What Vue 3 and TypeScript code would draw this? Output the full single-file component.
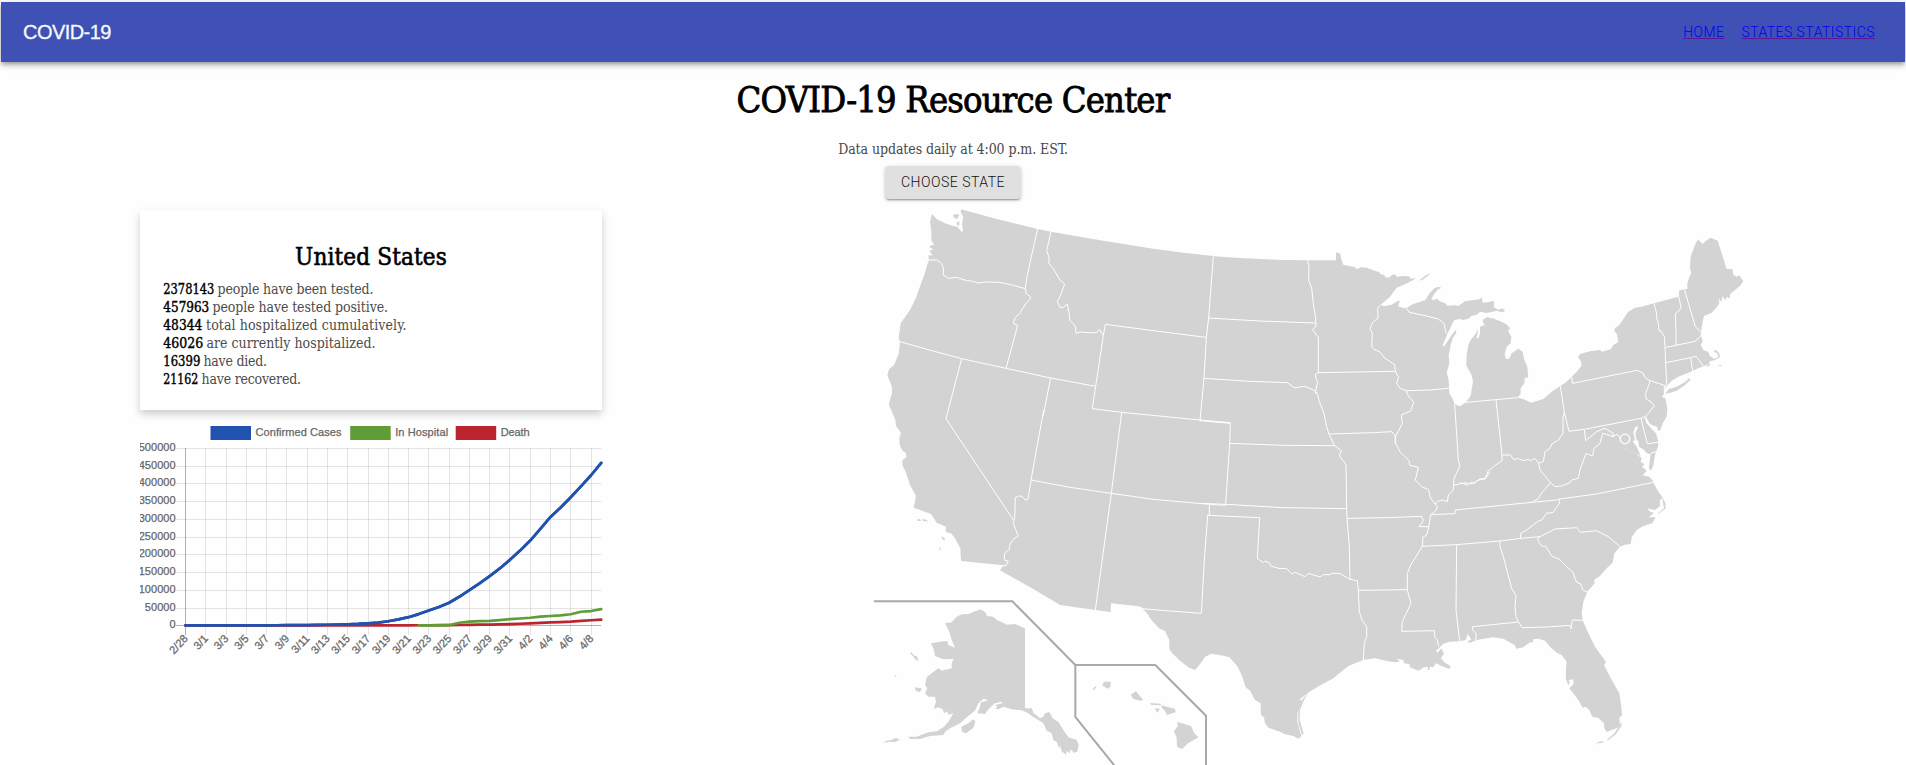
<script setup lang="ts">
type Run = [sheet: keyof typeof sheets, points: string]

// The map is drawn on overlapping sheets; each sheet has its own origin and 1/3 unit steps.
const sheets = {
  nw: [870, 200],
  n: [1200, 230],
  ne: [1480, 220],
  sw: [870, 410],
  s: [1200, 430],
  se: [1460, 450],
  inset: [860, 590],
} as const

const place = ([sheet, points]: Run): string => {
  const [ox, oy] = sheets[sheet]
  return points
    .trim()
    .split(/\s+/)
    .map((pair) => {
      const [x, y] = pair.split(',').map(Number)
      return `${(ox + x / 3).toFixed(2)},${(oy + y / 3).toFixed(2)}`
    })
    .join(' ')
}

const mainland = ([
  ['nw', '273,28 380,57 503,87 543,95 620,109 700,122 850,146 940,158 1030,168'],
  ['n', '40,79 120,84 250,90 323,91 408,91 408,67 421,71 424,88 430,104 445,108 465,111 470,118 482,112 500,113 520,121 538,127 540,132 552,134 556,142 566,143 576,135 586,133 590,140 612,138 628,139 632,146 646,144 640,150 615,163 590,173 570,200 542,224 553,229 575,224 592,214 600,212 594,229 610,234 620,233 640,222 675,211 690,188 703,175 715,170 724,173 712,180 702,193 694,206 700,211 710,206 720,214 736,220 742,227 765,226 775,228 795,214 820,210 838,208 845,202 848,218 860,217 882,213'],
  ['ne', '42,262 55,269 66,265 75,271 70,277 60,275 50,272 35,276 20,279 0,275'],
  ['n', '830,254 815,257 805,266 790,270 780,267 763,270 755,285 748,300 742,312 735,330 727,347 732,349 742,335 755,315 769,298 768,310 758,325 752,345 746,375 748,400 740,428 746,450 748,490 757,505 764,523 780,529 798,517 812,497 819,455 815,435 799,407 800,375 805,345 812,330 822,318 826,312 835,298 833,310 829,323 836,324 840,310 840,290 856,286 848,275 860,264 880,265 893,272'],
  ['ne', '5,318 16,312 8,304 10,298 22,291 40,298 58,302 78,312 88,322 90,328 84,330 88,340 94,350 92,370 80,380 74,402 78,417 88,416 95,400 115,386 128,395 133,420 142,440 145,472 134,475 133,490 122,505 122,522 112,533 130,537 153,548 190,537 215,515 241,498 258,487 275,470 290,455 305,437 303,425 294,410 300,402 330,394 360,390 365,395 392,388 400,375 415,366 411,343 403,333 405,325 418,315 430,297 445,275 465,263 485,260 522,250 596,230 598,211 613,208 622,206 622,190 628,170 634,160 630,145 632,110 645,75 654,58 662,66 667,72 678,62 692,53 713,62 725,100 740,147 757,147 760,165 770,170 778,166 790,184 780,198 765,210 750,222 750,236 742,230 735,240 728,228 724,245 716,235 718,250 710,262 695,278 685,283 672,288 668,305 664,330 662,345 668,362 662,375 670,390 685,396 690,408 702,416 715,412 712,400 700,394 708,390 717,398 720,412 705,420 690,424 685,432 672,438 655,445 638,453 600,468 575,482 563,495 556,506 553,522 545,530 556,535 562,565 560,590 548,610 540,632 532,630 533,622 510,612 503,600 498,588 495,597 500,610 515,627 528,640 535,665 534,680 528,695 523,715 520,735 513,752 507,745 510,715 512,702 500,700 490,688 478,682 475,665 468,655 466,640 475,618 465,622 460,640 465,660 458,664 470,680 475,692 482,708 462,698 435,690 430,680 434,690 465,700 485,714 482,726 494,732 486,740 500,752 488,766 508,770 518,782'],
  ['se', '580,97 595,125 608,143 600,150 600,168 585,180 562,175 570,185 582,188 567,202 587,202 577,220 550,228 530,240 515,262 512,282 495,284 480,290 463,310 458,338 440,355 420,378 402,390 404,400 382,425 370,455 365,490 368,511 385,550 405,590 430,625 438,637 432,645 450,680 478,730 484,770 486,796 478,803 480,825 472,834 460,838 440,846 433,835 432,820 415,804 397,800 388,780 377,770 368,773 355,750 328,715 340,703 340,688 325,690 330,697 325,706 317,685 318,660 320,635 305,615 290,608 270,590 255,572 235,566 220,568 218,578 210,577 190,592 168,596 165,586 130,566 100,562 70,566 48,571 30,578 22,575 34,568'],
  ['s', '803,612 797,630 779,634 750,635 730,641 720,652 708,662 712,668 724,655 732,672 722,685 735,698 752,708 748,717 725,708 708,700 700,712 690,710 688,721 682,718 685,710 672,712 655,722 630,712 628,702 612,700 610,690 590,686 600,695 583,697 560,693 525,685 490,690 445,708 400,745 350,772 325,788 305,803 298,808 305,812 300,828 292,850 292,875 300,905 305,918 295,926 280,918 255,913 240,905 205,893 195,880 192,862 183,855 182,820 165,810 150,782 137,772 125,735 112,708 88,682 70,677 35,671 15,680 2,700'],
  ['inset', '1005,240 985,232 960,212 935,188 928,175 928,150 915,123 897,115 870,85 865,75 845,52 835,49 753,40 752,66 706,60 600,45'],
  ['sw', '500,543 390,481 400,466 340,460 273,453 271,415 255,385 243,370 227,366 228,350 200,338 183,312 150,300 131,293 138,258 120,225 107,185 97,165 98,150 110,140 107,128 97,122 89,105 88,85 93,68 78,48 76,30'],
  ['nw', '57,615 58,605 66,580 66,560 52,525 57,508 72,495 86,462 90,425 86,415 92,370 120,330 138,293 155,245 163,225 172,192 178,180 175,175 176,165 188,167 178,152 192,148 180,143 180,137 192,134 184,120 184,95 180,65 186,42 200,57 225,70 250,78 262,80 275,96 279,92 276,72 280,52 272,36'],
] as Run[]).map(place).join(' ')

const islands = ([
  ['nw', '249,45 262,42 268,46 262,56 252,54'],
  ['nw', '260,67 268,64 268,76 262,78'],
  ['n', '658,151 675,138 690,129 686,136 666,151'],
  ['ne', '556,521 565,508 590,500 612,488 628,475 632,479 615,495 590,512 566,520'],
  ['ne', '679,437 688,430 691,434 682,440'],
  ['ne', '712,438 724,434 725,438'],
  ['sw', '141,329 150,326 153,333 144,333'],
  ['sw', '156,328 164,328 176,334 160,334'],
  ['sw', '213,378 224,385 224,392 218,389'],
  ['sw', '207,408 215,422 209,419'],
  ['se', '485,815 484,828 468,852 443,872 441,870 463,850 478,828'],
  ['se', '402,886 415,876 428,873 430,878 414,880'],
  ['se', '606,142 616,158 617,175 595,192 594,190 612,175'],
  ['s', '325,788 312,810 300,840 299,870 311,912 306,914 295,880 295,845 304,812'],
  ['inset', '362,58 378,68 380,78 400,80 410,90 430,98 440,104 465,102 495,115 495,355 515,355 520,368 540,385 550,380 555,370 568,366 578,385 596,397 610,420 625,442 650,450 656,465 652,485 642,488 632,478 628,490 620,482 618,494 605,484 600,466 597,475 590,455 580,450 575,430 560,422 550,400 535,390 515,378 505,370 485,361 455,358 430,350 415,358 406,357 412,350 405,345 427,340 425,335 405,340 385,358 375,372 352,370 360,350 362,337 378,333 383,330 370,326 355,340 345,362 320,382 300,400 270,415 255,425 250,435 210,438 180,447 150,447 145,440 170,440 205,427 230,424 250,412 265,395 280,370 265,374 262,364 252,370 248,358 235,352 221,356 228,335 225,320 205,320 195,310 202,295 195,285 200,262 215,250 235,235 245,242 275,235 275,222 280,207 250,208 225,198 222,180 213,160 240,155 262,153 265,165 285,173 275,150 268,125 255,100 275,97 290,80 305,73 325,72 345,64'],
  ['inset', '304,410 325,400 340,388 346,394 340,414 318,430 306,426'],
  ['inset', '151,190 155,186 160,196 170,198 176,212 168,210 160,200'],
  ['inset', '102,253 110,262 106,262'],
  ['inset', '165,292 185,295 180,307 167,302'],
  ['inset', '68,458 80,452 95,450 108,443 119,449 105,456 90,455'],
  ['inset', '726,285 733,275 752,275 752,290 742,296'],
  ['inset', '698,298 705,289 709,292 703,299'],
  ['inset', '812,314 828,304 848,328 846,333 820,327'],
  ['inset', '870,339 903,341 903,346 874,345'],
  ['inset', '884,355 900,356 892,368'],
  ['inset', '904,346 944,356 947,367 920,375 915,362 907,356'],
  ['inset', '951,395 993,408 1004,431 1016,442 985,459 966,477 951,470 950,443 942,424 954,407'],
] as Run[]).map(place)

const borders = ([
  ['nw', '178,180 200,180 215,190 220,205 220,225 235,235 260,232 290,242 305,243 325,249 345,246 390,247 430,256 466,266'],
  ['nw', '503,87 485,165 470,235 466,266 468,280 481,290 481,296 470,308 455,330 450,340 435,353 430,370 443,376 434,410 408,505'],
  ['nw', '90,425 200,456 275,476 408,505 542,534 677,559'],
  ['nw', '275,476 228,656'],
  ['sw', '228,26 430,330'],
  ['nw', '542,534 519,650'],
  ['sw', '521,0 483,210 474,268 466,270 460,262 448,257 436,263 434,325 430,340 440,366 445,378 430,388 420,402 418,418 404,430 403,450 415,454 408,466 395,468'],
  ['nw', '543,95 530,152 538,175 536,190 548,203 570,240 584,252 572,285 562,305 570,322 580,322 592,312 598,345 600,362 616,378 618,400 630,396 655,398 680,398 688,388 700,406'],
  ['nw', '1008,412 850,392 706,373 700,406 677,559 667,626 755,637 990,660 1081,668'],
  ['n', '40,79 26,264 19,322 12,445 0,572 91,580 89,640'],
  ['sw', '755,7 724,250 676,600'],
  ['sw', '483,210 600,232 724,250 850,268 1018,283 1067,286'],
  ['sw', '1018,283 1018,316'],
  ['s', '172,385 179,263 23,256 13,390 4,550 -90,543 -185,535 -183,550'],
  ['s', '0,220 77,223 250,233 438,236'],
  ['s', '77,223 89,40 250,46 404,47'],
  ['s', '172,385 190,398 195,393 210,400 212,408 240,416 260,415 275,432 285,427 315,440 325,430 360,441 370,434 390,434 395,430 418,430 450,448'],
  ['n', '26,264 180,273 345,279'],
  ['n', '323,91 327,110 326,150 335,175 340,220 347,265 348,288 338,300 355,322 355,428 586,424'],
  ['n', '12,445 150,454 262,458 283,473 315,469 345,482 348,492'],
  ['n', '355,428 347,432 347,444 353,455 347,485 352,490 358,515 372,550 380,590 387,612 404,647'],
  ['s', '404,47 424,62 418,78 438,103 440,236 441,265 448,350 450,448 472,452 475,480 478,545 487,572 500,590 500,620 493,640 490,690'],
  ['n', '387,612 520,608 575,605 587,618'],
  ['n', '542,224 533,235 534,265 520,275 510,295 517,310 515,348 522,358 540,366 555,385 584,404 586,424 596,442 590,460 600,475 618,482 625,498 641,516 632,543 604,555 607,580 597,600 587,618 585,640'],
  ['s', '585,20 587,40 600,65 627,92 629,106 655,112 646,150 668,172 685,178 692,205 705,222 712,230 708,242 692,254 687,288 680,315 668,322 668,348 660,360 648,380 632,405 622,430 622,480 633,520 607,575 605,604 703,602 705,622 712,630 716,650'],
  ['n', '618,482 690,480 746,475'],
  ['n', '618,233 628,247 675,257 715,267 732,280 738,308 742,312'],
  ['n', '764,523 775,690 780,708'],
  ['s', '780,108 762,145 760,180 745,195 742,215 730,210 715,213 705,222'],
  ['n', '798,517 887,509 952,503'],
  ['ne', '48,540 66,705 66,722 40,740 25,752 15,775'],
  ['ne', '241,498 253,577 249,590 249,640 235,660 215,672 210,685 195,695 190,725 176,730 165,715 150,722 145,718 130,722 115,716 100,718 92,705 66,705'],
  ['se', '75,85 50,92 45,100 35,96 22,105 0,98'],
  ['s', '870,125 855,148 840,146 825,158 805,162 800,158 762,165'],
  ['ne', '176,730 180,750 212,788'],
  ['se', '272,98 285,110 305,108 330,98 335,90 355,85 360,60 378,10 398,18 402,-5 420,-20 428,-50 460,-40'],
  ['ne', '313,630 317,662 350,635 375,625 400,640 398,650 412,643 420,655'],
  ['ne', '253,577 267,634 313,628 483,595 495,590 505,580 523,557 510,543 498,537 497,520 503,505 508,490 510,482 553,496 553,525'],
  ['ne', '275,470 277,490 472,451 480,455 490,460 495,473 510,482'],
  ['ne', '483,595 502,671 535,667'],
  ['ne', '512,700 528,695'],
  ['ne', '522,250 530,280 529,290 535,310 537,332 545,335 553,350 555,383 557,428 560,490 556,505'],
  ['ne', '596,230 603,262 598,272 586,280 588,335 588,375'],
  ['ne', '613,208 646,320 662,335'],
  ['ne', '555,383 588,376 645,364 662,348'],
  ['ne', '557,428 632,413 648,409 670,438'],
  ['ne', '632,413 638,453'],
  ['se', '272,98 240,135 236,145 215,157'],
  ['s', '692,254 765,251 766,240 995,217'],
  ['se', '215,157 290,150 298,147 410,132 580,97'],
  ['s', '665,349 770,344 900,333'],
  ['se', '120,273 182,265 240,260 285,237 350,233 362,247 410,242 445,260 480,290'],
  ['se', '298,147 298,160 290,172 280,187 260,190 245,210 235,213 200,240 182,250 182,265'],
  ['se', '240,260 233,265 235,275 245,288 258,290 275,318 298,328 320,350 338,366 350,397 362,402 370,422 382,425'],
  ['se', '120,273 120,290 130,320 155,415 168,437 165,470 168,500 175,516 187,533 260,531 329,526 333,536 337,510 368,511'],
  ['se', '175,516 38,530 38,540 48,550 48,571'],
  ['s', '770,344 768,540 779,634'],
  ['s', '441,265 560,263 665,259 670,272 657,290 687,290'],
  ['s', '475,481 622,479'],
] as Run[]).map(place)

const frames = ([
  ['inset', '42,34 457,34 646,225 886,225 1038,377 1038,530'],
  ['inset', '646,225 646,381 766,530'],
] as Run[]).map(place)

const stats: [number, string][] = [
  [2378143, 'people have been tested.'],
  [457963, 'people have tested positive.'],
  [48344, 'total hospitalized cumulatively.'],
  [46026, 'are currently hospitalized.'],
  [16399, 'have died.'],
  [21162, 'have recovered.'],
]
const statSpans = [
  [51, 54.5, 156],
  [46, 49.5, 175.5],
  [39, 43, 200.5],
  [40, 43.5, 169],
  [37, 40.5, 63.5],
  [35, 38.5, 99.5],
]

const confirmed = [0, 0, 0, 0, 0, 100, 140, 200, 250, 400, 500, 780, 1050, 1300, 1900, 2450, 3173, 4019, 5722, 7730, 11719, 17033, 23197, 31879, 42152, 51954, 63928, 80735, 99413, 118234, 139061, 160530, 184683, 210816, 239099, 271988, 305755, 332308, 361331, 391665, 423164, 457963]
const hospital = [0, 0, 0, 500, 7500, 10500, 11800, 13000, 15000, 17500, 19500, 21500, 24500, 26500, 28500, 31500, 38500, 40500, 46026]
const deaths = [...Array(21).fill(0), 200, 270, 390, 470, 670, 900, 1150, 1530, 1960, 2430, 2940, 3740, 4650, 5700, 6900, 8300, 9500, 10700, 12700, 14500, 16399]

const left = 45.5
const step = 415.7 / 41
const px = (i: number) => left + i * step
const py = (v: number) => 215.4 - (v / 500000) * 177.4
const line = (values: number[], start = 0) => values.map((v, i) => `${px(i + start).toFixed(2)},${py(v).toFixed(2)}`).join(' ')

const series = [
  { color: '#2152af', points: line(confirmed) },
  { color: '#bc2430', points: line(deaths) },
  { color: '#5f9d37', points: line(hospital, 23) },
  { color: '#2152af', points: line(confirmed) },
]
const legend = [
  { x: 70.5, label: 'Confirmed Cases', color: '#2152af', width: 86 },
  { x: 210.2, label: 'In Hospital', color: '#5f9d37', width: 53 },
  { x: 315.7, label: 'Death', color: '#bc2430', width: 29 },
]
const yTicks = Array.from({ length: 11 }, (_, i) => i * 50000)
const xTicks = Array.from({ length: 21 }, (_, i) => {
  const day = new Date(2020, 1, 28 + i * 2)
  return { x: px(i * 2), label: `${day.getMonth() + 1}/${day.getDate()}` }
})
</script>

<template>
  <div class="page">
    <header class="bar">
      <span class="brand">COVID-19</span>
      <nav class="nav">
        <a href="#">HOME</a>
        <a href="#">STATES STATISTICS</a>
      </nav>
    </header>
    <section class="intro">
      <h1>COVID-19 Resource Center</h1>
      <p>Data updates daily at 4:00 p.m. EST.</p>
      <button type="button">CHOOSE STATE</button>
    </section>
    <main class="content">
      <div class="summary">
        <article class="card">
          <h2>United States</h2>
          <svg class="stats" width="416" height="110" viewBox="0 0 416 110">
            <g v-for="(s, i) in stats" :key="i">
              <text class="count" x="0.3" :y="14.4 + i * 18" :textLength="statSpans[i][0]" lengthAdjust="spacingAndGlyphs">{{ s[0] }}</text>
              <text :x="statSpans[i][1]" :y="14.4 + i * 18" :textLength="statSpans[i][2]">{{ s[1] }}</text>
            </g>
          </svg>
        </article>
        <svg class="chart" width="480" height="260" viewBox="0 0 480 260">
          <g v-for="l in legend" :key="l.label">
            <rect :x="l.x" y="16" width="40.5" height="14" :fill="l.color" />
            <text :x="l.x + 45" y="26.4" :textLength="l.width">{{ l.label }}</text>
          </g>
          <g v-for="v in yTicks" :key="v">
            <line x1="36" :x2="px(41)" :y1="Math.round(py(v)) + 0.5" :y2="Math.round(py(v)) + 0.5" :class="v ? 'grid' : 'axis'" />
            <text x="35.6" :y="py(v) + 3" text-anchor="end" :textLength="String(v).length * 6.15">{{ v }}</text>
          </g>
          <g v-for="(t, i) in xTicks" :key="t.label">
            <line :x1="Math.floor(t.x) + 0.5" :x2="Math.floor(t.x) + 0.5" y1="38" y2="225" :class="i ? 'grid' : 'axis'" />
            <text :transform="`translate(${t.x + 3} 229) rotate(-47)`" text-anchor="end">{{ t.label }}</text>
          </g>
          <polyline v-for="(s, i) in series" :key="i" :points="s.points" :stroke="s.color" class="series" />
        </svg>
      </div>
      <svg class="map" width="900" height="565" viewBox="870 200 900 565">
        <polygon :points="mainland" class="land" />
        <polygon v-for="p in islands" :key="p" :points="p" class="land" />
        <polyline v-for="p in borders" :key="p" :points="p" class="border" />
        <circle cx="1625" cy="439" r="4.8" class="district" />
        <polyline v-for="p in frames" :key="p" :points="p" class="frame" />
      </svg>
    </main>
  </div>
</template>

<style>
body {
  margin: 0;
  background: #fefefe;
}
</style>

<style scoped>
.page {
  height: 763px;
  padding-top: 2px;
  overflow: hidden;
  background: #fefefe;
  font-family: "DejaVu Serif Condensed", "DejaVu Serif", serif;
}
.bar {
  height: 60px;
  margin: 0 1px;
  padding: 0 30px 0 22px;
  box-sizing: border-box;
  display: flex;
  align-items: center;
  justify-content: space-between;
  background: #3f51b5;
  box-shadow: 0 2px 4px -1px rgba(0, 0, 0, 0.3), 0 4px 5px rgba(0, 0, 0, 0.14), 0 1px 10px rgba(0, 0, 0, 0.12);
  font-family: Roboto, sans-serif;
}
.brand {
  color: #f7f8fc;
  font-family: "Liberation Sans", Arial, sans-serif;
  font-size: 20px;
  letter-spacing: -0.55px;
  -webkit-text-stroke: 0.3px #f7f8fc;
}
.nav {
  display: flex;
  gap: 17px;
  padding-bottom: 1px;
  font-size: 14px;
  font-weight: 300;
  letter-spacing: 0.45px;
}
.nav a {
  color: #0000ee;
  text-decoration-color: #551a8b;
}
.intro {
  height: 138px;
  display: flex;
  flex-direction: column;
  align-items: center;
}
h1 {
  margin: 14px 0 0;
  font-size: 36px;
  line-height: 48px;
  font-weight: 400;
  white-space: nowrap;
  color: #000;
  letter-spacing: -0.8px;
  -webkit-text-stroke: 0.8px #000;
}
p {
  margin: 15px 0 0;
  font-size: 14px;
  line-height: 20px;
  color: #484848;
  letter-spacing: -0.08px;
}
button {
  width: 136px;
  height: 33px;
  margin-top: 7px;
  padding: 0 0 2px;
  border: 0;
  border-radius: 4px;
  background: #e0e0e0;
  box-shadow: 0 2px 2px -1px rgba(0, 0, 0, 0.35), 0 1px 4px rgba(0, 0, 0, 0.18);
  color: #111;
  font: 300 14px Roboto, sans-serif;
  letter-spacing: 0.5px;
}
.content {
  display: grid;
  grid-template-columns: 730px 900px;
  padding-left: 140px;
}
.summary {
  padding-top: 10px;
}
.card {
  width: 462px;
  height: 200px;
  padding: 32px 23px 0;
  box-sizing: border-box;
  background: #fff;
  box-shadow: 0 4px 8px rgba(0, 0, 0, 0.2);
}
h2 {
  margin: 0;
  font-size: 24px;
  line-height: 30px;
  font-weight: 400;
  text-align: center;
  color: #000;
  letter-spacing: 0.15px;
  -webkit-text-stroke: 0.6px #000;
}
.stats {
  display: block;
  margin-top: 8px;
  font-size: 14px;
  fill: #4c4c4c;
}
.count {
  fill: #000;
  stroke: #000;
  stroke-width: 0.4px;
}
.chart {
  display: block;
  font: 11px "Liberation Sans", Arial, sans-serif;
  fill: #666;
}
.chart text {
  stroke: #666;
  stroke-width: 0.25px;
}
.grid {
  stroke: rgba(0, 0, 0, 0.1);
}
.axis {
  stroke: rgba(0, 0, 0, 0.3);
}
.series {
  fill: none;
  stroke-width: 2.7;
  stroke-linejoin: round;
  stroke-linecap: round;
}
.map {
  display: block;
}
.land {
  fill: #d3d3d3;
}
.border {
  fill: none;
  stroke: #fff;
  stroke-width: 1;
  stroke-linejoin: round;
}
.district {
  fill: #d3d3d3;
  stroke: #fff;
  stroke-width: 1.3;
}
.frame {
  fill: none;
  stroke: #a9a9a9;
  stroke-width: 2;
}
</style>
